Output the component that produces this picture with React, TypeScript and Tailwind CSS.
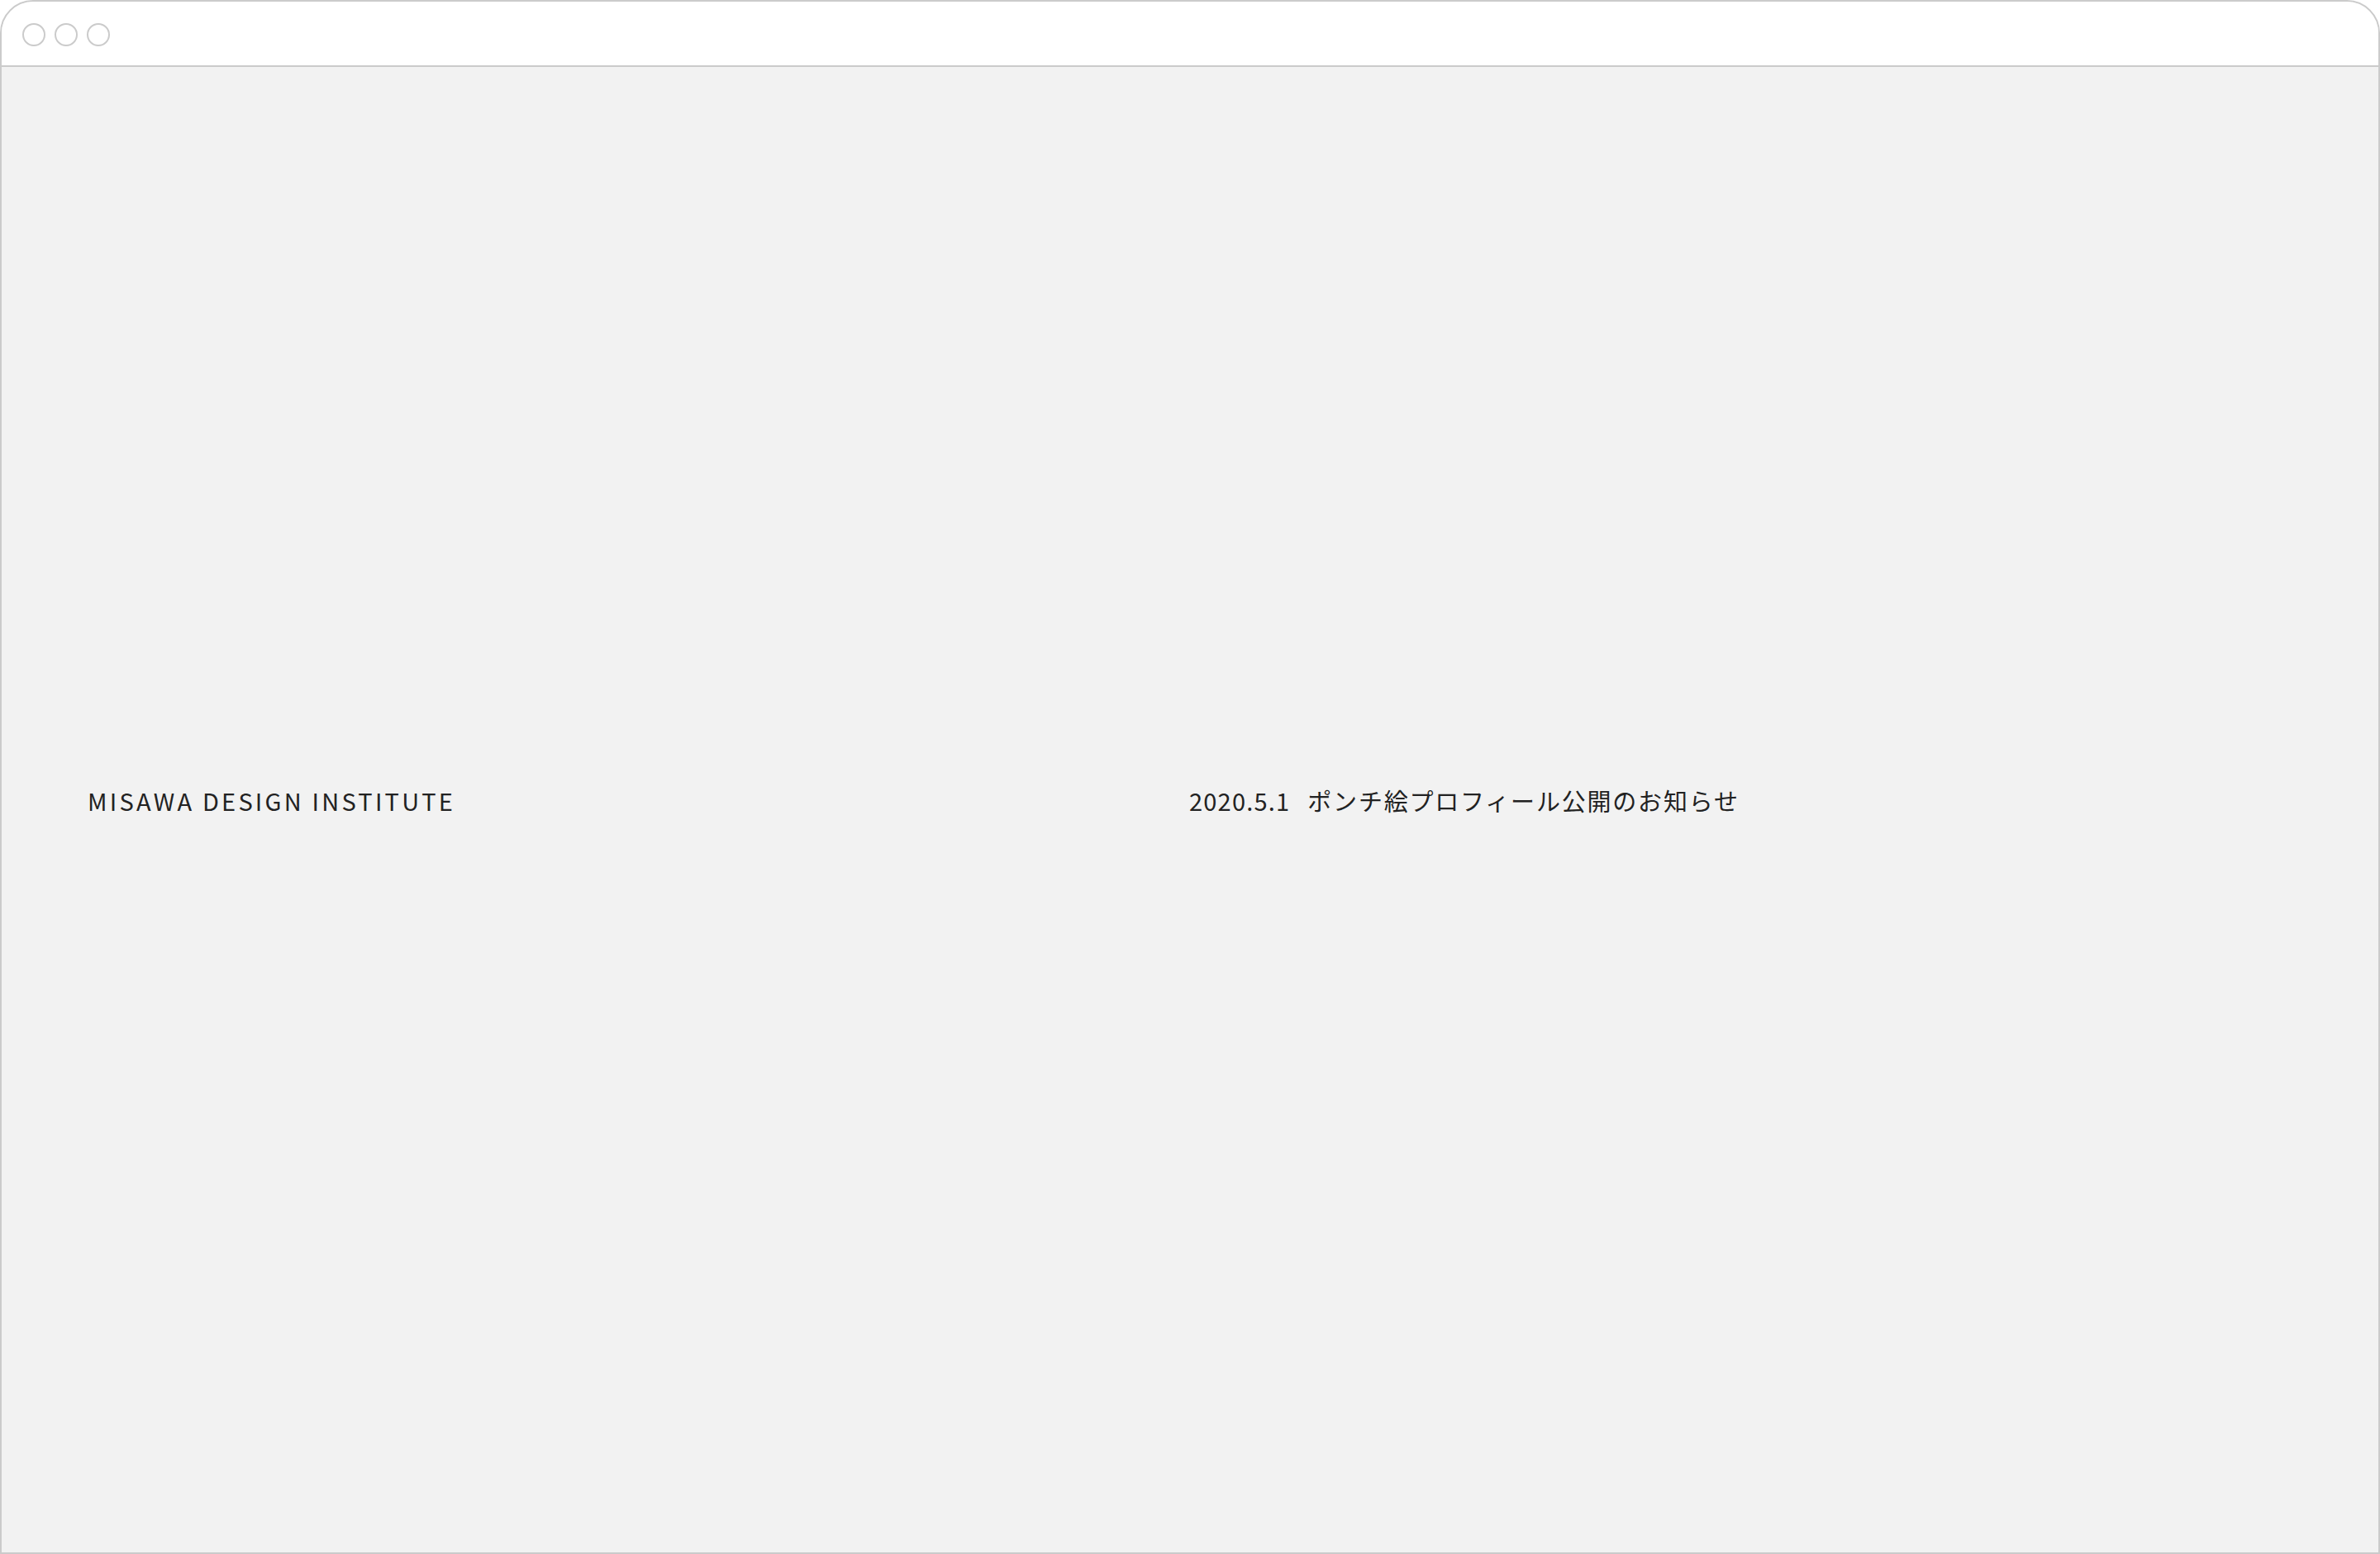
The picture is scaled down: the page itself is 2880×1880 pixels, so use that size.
import React from "react";

export default function App() {
  const font = {
    fontFamily: '"Noto Sans CJK JP", "Noto Sans", sans-serif',
  };
  return (
    <div className="w-[2880px] h-[1880px] bg-white">
      <div className="w-full h-full flex flex-col border-2 border-[#cbcbcb] rounded-t-[40px] overflow-hidden bg-[#f2f2f2]">
        <div className="h-[79px] shrink-0 bg-white border-b-2 border-[#cbcbcb] flex items-center gap-[11px] pl-[25px] pt-[3px]">
          <div className="w-[28px] h-[28px] rounded-full border-2 border-[#cbcbcb]" />
          <div className="w-[28px] h-[28px] rounded-full border-2 border-[#cbcbcb]" />
          <div className="w-[28px] h-[28px] rounded-full border-2 border-[#cbcbcb]" />
        </div>
        <div className="flex-1 flex items-center pb-[22px] text-[#222222]" style={font}>
          <div className="w-[1437px] pl-[104px] text-[29px] tracking-[3.2px] leading-none">
            MISAWA DESIGN INSTITUTE
          </div>
          <div className="flex items-center text-[29px] leading-none">
            <span className="tracking-[1.2px]">2020.5.1</span>
            <span className="ml-[21px] tracking-[1.8px]">ポンチ絵プロフィール公開のお知らせ</span>
          </div>
        </div>
      </div>
    </div>
  );
}
